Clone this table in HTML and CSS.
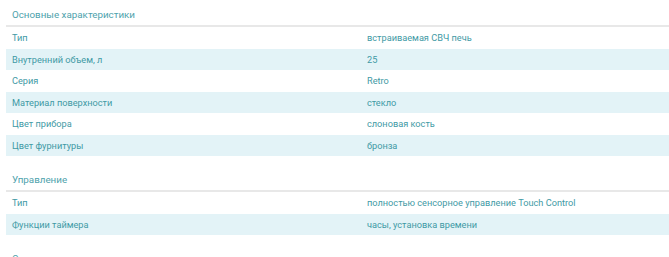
FILE: index.html
```html
<!DOCTYPE html>
<html lang="ru">
<head>
<meta charset="utf-8">
<link rel="stylesheet" href="styles.css">
</head>
<body>
<div class="specs">
  <section class="group">
    <div class="group-title">Основные характеристики</div>
    <div class="row"><div class="label">Тип</div><div class="value">встраиваемая СВЧ печь</div></div>
    <div class="row alt"><div class="label">Внутренний объем, л</div><div class="value">25</div></div>
    <div class="row"><div class="label">Серия</div><div class="value">Retro</div></div>
    <div class="row alt"><div class="label">Материал поверхности</div><div class="value">стекло</div></div>
    <div class="row"><div class="label">Цвет прибора</div><div class="value">слоновая кость</div></div>
    <div class="row alt"><div class="label">Цвет фурнитуры</div><div class="value">бронза</div></div>
  </section>
  <section class="group">
    <div class="group-title">Управление</div>
    <div class="row"><div class="label">Тип</div><div class="value">полностью сенсорное управление Touch Control</div></div>
    <div class="row alt"><div class="label">Функции таймера</div><div class="value">часы, установка времени</div></div>
  </section>
  <section class="group">
    <div class="group-title">Описание</div>
  </section>
</div>
</body>
</html>
```
FILE: styles.css
```css
html, body {
  margin: 0;
  padding: 0;
  background: #ffffff;
}
body {
  font-family: Roboto, "Liberation Sans", Arial, sans-serif;
  font-size: 9.2px;
  color: #3f9aa5;
  overflow: hidden;
  height: 257px;
}
.specs {
  padding-left: 6px;
  display: flex;
  flex-direction: column;
}
.group {
  display: flex;
  flex-direction: column;
}
.group + .group {
  margin-top: 9px;
}
.group-title {
  height: 27px;
  line-height: 21px;
  padding-left: 6px;
  padding-top: 4px;
  box-sizing: border-box;
  border-bottom: 2px solid #e8e8e8;
  color: #4ea2ac;
  font-size: 9.8px;
}
.row {
  display: grid;
  grid-template-columns: 355px 1fr;
  height: 21.5px;
  line-height: 21.5px;
}
.row.alt {
  background: #e3f3f7;
}
.label, .value {
  padding-left: 6px;
  white-space: nowrap;
}
```
